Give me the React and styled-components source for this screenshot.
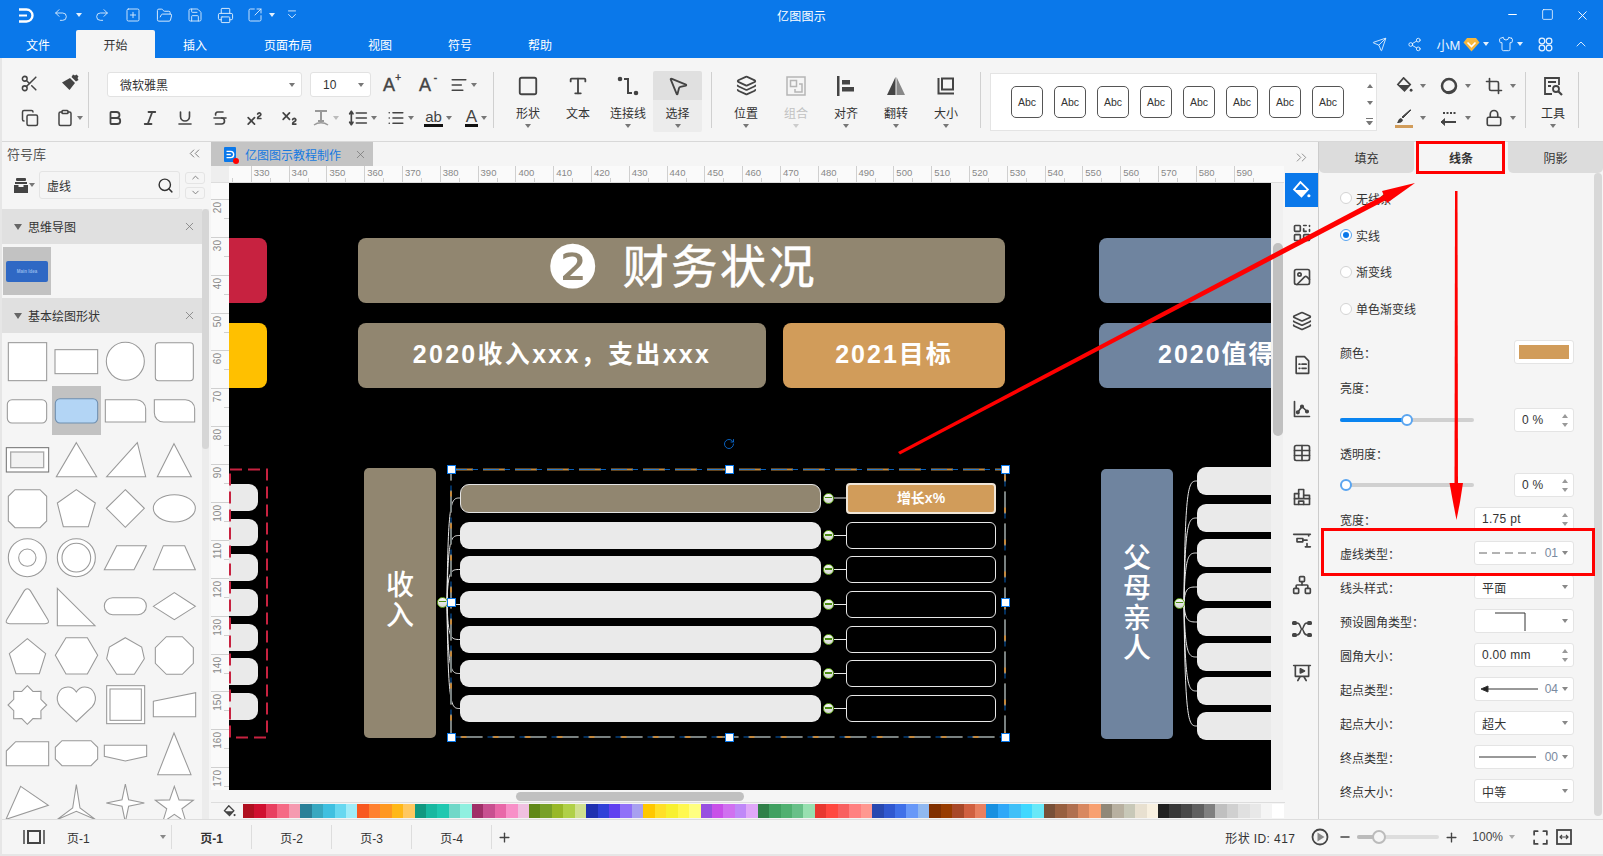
import React from "react";
import styled, { createGlobalStyle } from "styled-components";
import {
  Undo2, Redo2, SquarePlus, FolderOpen, Save, Printer, SquareArrowOutUpRight, Minus, Square, X,
  Send, Share2, Shirt, ChevronUp, ChevronDown, ChevronsLeft, ChevronsRight, Scissors, Copy, Clipboard,
  Bold, Italic, Underline, Strikethrough, Superscript, Subscript, AlignLeft, List, MousePointer2,
  Layers, Crop, Lock, Search, Image, Table, Network, Plus, RotateCw, Type,
} from "lucide-react";

const GlobalStyle = createGlobalStyle`
  html, body { margin: 0; padding: 0; width: 1603px; height: 856px; overflow: hidden; }
  body { font-family: "Liberation Sans", "Noto Sans CJK SC", sans-serif; font-size: 12px; color: #333; }
`;

const Ico = ({ size = 20, w = 1.8, vb = 24, children }) => (
  <svg width={size} height={size} viewBox={`0 0 ${vb} ${vb}`} fill="none" stroke="currentColor" strokeWidth={w} strokeLinecap="round" strokeLinejoin="round">
    {children}
  </svg>
);

const Window = styled.div`
  position: relative;
  width: 1603px;
  height: 856px;
  display: flex;
  flex-direction: column;
  background: #e6e6e6;
  overflow: hidden;
`;

const TitleBar = styled.div`
  height: 30px;
  display: grid;
  grid-template-columns: 1fr auto 1fr;
  align-items: center;
  background: #0a78ea;
  color: #fff;
`;
const Qat = styled.div`
  display: flex;
  align-items: center;
  padding-left: 10px;
  color: #d6e9fc;
`;
const QatBtn = styled.div`
  width: ${(p) => p.$w}px;
  padding-left: ${(p) => p.$pl || 0}px;
  box-sizing: border-box;
  display: flex;
  align-items: center;
  justify-content: ${(p) => (p.$pl ? "flex-start" : "center")};
  gap: ${(p) => p.$gap || 5}px;
`;
const AppTitle = styled.div`
  font-size: 12px;
  letter-spacing: 0.2px;
`;
const WinControls = styled.div`
  display: flex;
  justify-content: flex-end;
  padding-right: 3px;
`;
const WinBtn = styled.div`
  width: 35px;
  display: flex;
  justify-content: center;
`;

const MenuBar = styled.div`
  height: 28px;
  display: flex;
  align-items: stretch;
  background: #0a78ea;
`;
const MenuTab = styled.div`
  width: ${(p) => p.$w}px;
  display: flex;
  align-items: center;
  justify-content: center;
  font-size: 12px;
  color: ${(p) => (p.$active ? "#333" : "#fff")};
  background: ${(p) => (p.$active ? "#f5f5f5" : "transparent")};
  border-radius: 2px 2px 0 0;
`;
const MenuRight = styled.div`
  margin-left: auto;
  display: flex;
  align-items: center;
  padding-right: 4px;
  color: #d6e9fc;
`;
const MenuIcon = styled.div`
  width: ${(p) => p.$w}px;
  display: flex;
  align-items: center;
  justify-content: center;
  gap: 3px;
  font-size: 13px;
  color: #e8f3fe;
`;

const Caret = styled.span`
  display: inline-block;
  flex: none;
  width: 0;
  height: 0;
  border-left: 3.5px solid transparent;
  border-right: 3.5px solid transparent;
  border-top: 4px solid ${(p) => p.$c || "#777"};
`;

const Body = styled.div`
  flex: 1;
  min-height: 0;
  display: flex;
  flex-direction: column;
  margin-left: 2px;
  margin-bottom: 2px;
  background: #f5f5f5;
`;

const Ribbon = styled.div`
  height: 84px;
  box-sizing: border-box;
  flex: none;
  display: flex;
  border-bottom: 1px solid #d8d8d8;
  color: #444;
`;
const RibbonSep = styled.div`
  width: 1px;
  height: 56px;
  margin-top: 14px;
  background: #d0d0d0;
  flex: none;
`;
const ClipGroup = styled.div`
  width: 86px;
  flex: none;
  padding: 10px 0 0 7px;
  box-sizing: border-box;
  display: grid;
  grid-template-columns: 41px 39px;
  grid-template-rows: 30px 40px;
  align-items: center;
  justify-items: center;
`;
const IconCell = styled.div`
  display: flex;
  align-items: center;
  justify-content: center;
  gap: ${(p) => p.$gap || 3}px;
  width: ${(p) => (p.$w ? `${p.$w}px` : "auto")};
  flex: none;
`;
const FontGroup = styled.div`
  width: 404px;
  flex: none;
  padding: 14px 0 0 18px;
  box-sizing: border-box;
  display: flex;
  flex-direction: column;
`;
const FontRow = styled.div`
  display: flex;
  align-items: center;
  height: ${(p) => p.$h}px;
  margin-top: ${(p) => p.$mt || 0}px;
  margin-left: ${(p) => p.$ml || 0}px;
`;
const ComboBox = styled.div`
  width: ${(p) => p.$w}px;
  margin-right: ${(p) => p.$mr || 0}px;
  height: 25px;
  flex: none;
  box-sizing: border-box;
  background: #fff;
  border: 1px solid #e2e2e2;
  border-radius: 3px;
  display: flex;
  align-items: center;
  justify-content: space-between;
  padding: 0 6px 0 12px;
  color: #333;
`;
const SizedGlyph = styled.span`
  position: relative;
  font-size: 18px;
  color: #444;
  -webkit-text-stroke: 0.4px #444;
  line-height: 1;
  sup {
    position: absolute;
    right: -6px;
    top: -3px;
    font-size: 10px;
    line-height: 1;
  }
`;
const UnderGlyph = styled.span`
  display: inline-block;
  font-size: ${(p) => p.$fs || 15}px;
  line-height: 15px;
  color: #444;
  border-bottom: 3px solid ${(p) => p.$bar || "#111"};
  padding: 0 1px;
`;
const ToolGroup = styled.div`
  flex: none;
  display: flex;
  padding: 13px ${(p) => p.$pr ?? 9}px 0 ${(p) => p.$pl ?? 9}px;
`;
const ToolBtn = styled.div`
  width: ${(p) => p.$w || 50}px;
  height: 61px;
  display: flex;
  flex-direction: column;
  align-items: center;
  background: ${(p) => (p.$active ? "linear-gradient(#e0e0e0 0 29px, #ececec 29px)" : "transparent")};
  border-radius: 2px;
  color: ${(p) => (p.$off ? "#c2c2c2" : "#444")};
`;
const ToolIcon = styled.div`
  height: 29px;
  display: flex;
  align-items: center;
  justify-content: center;
`;
const ToolLabel = styled.div`
  margin-top: 6px;
  line-height: 17px;
  font-size: 12px;
  color: ${(p) => (p.$off ? "#c2c2c2" : "#333")};
`;
const ToolCaret = styled(Caret)`
  margin-top: 1px;
`;
const Gallery = styled.div`
  width: 387px;
  height: 58px;
  margin: 15px 0 0 9px;
  flex: none;
  background: #fff;
  border: 1px solid #e4e4e4;
  box-sizing: border-box;
  display: flex;
  align-items: center;
  padding-left: 20px;
  gap: 11px;
  position: relative;
`;
const AbcBox = styled.div`
  width: 32px;
  height: 32px;
  box-sizing: border-box;
  border: 1px solid #555;
  border-radius: 5px;
  display: flex;
  align-items: center;
  justify-content: center;
  font-size: 10.5px;
  color: #333;
  background: #fff;
`;
const GalleryScroll = styled.div`
  margin-left: auto;
  margin-right: 3px;
  height: 50px;
  display: flex;
  flex-direction: column;
  align-items: center;
  justify-content: space-between;
  padding: 7px 0 2px;
  box-sizing: border-box;
`;
const UpTri = styled.span`
  display: block;
  border-left: 3px solid transparent;
  border-right: 3px solid transparent;
  border-bottom: 4px solid #777;
`;
const MoreTri = styled.span`
  display: block;
  width: 7px;
  border-top: 1px solid #777;
  &::after {
    content: "";
    display: block;
    margin-top: 2px;
    border-left: 3.5px solid transparent;
    border-right: 3.5px solid transparent;
    border-top: 4px solid #777;
  }
`;
const FormatGrid = styled.div`
  width: 148px;
  flex: none;
  padding: 13px 0 0 11px;
  box-sizing: border-box;
  display: grid;
  grid-template-columns: repeat(3, 45px);
  grid-template-rows: 29px 36px;
  align-items: center;
`;
const BrushStack = styled.div`
  display: flex;
  flex-direction: column;
  align-items: center;
`;
const ColorBar = styled.div`
  width: 18px;
  height: 3px;
  background: #d19c5a;
  margin-top: 1px;
`;

const Main = styled.div`
  flex: 1;
  min-height: 0;
  display: flex;
`;

const LeftPanel = styled.div`
  width: 207px;
  flex: none;
  display: flex;
  flex-direction: column;
  overflow: hidden;
`;
const PanelHead = styled.div`
  height: 23px;
  flex: none;
  box-sizing: border-box;
  display: flex;
  align-items: center;
  justify-content: space-between;
  padding: 0 6px 0 5px;
  font-size: 13px;
  color: #555;
`;
const SearchRow = styled.div`
  height: 34px;
  margin: 3px 0 7px;
  flex: none;
  display: flex;
  align-items: center;
  padding-left: 12px;
  color: #444;
`;
const DrawerBtn = styled.div`
  width: 25px;
  flex: none;
  display: flex;
  align-items: center;
  gap: 1px;
`;
const SearchBox = styled.div`
  width: 141px;
  height: 28px;
  flex: none;
  box-sizing: border-box;
  border: 1px solid #e4e4e4;
  border-radius: 3px;
  display: flex;
  align-items: center;
  justify-content: space-between;
  padding: 0 5px 0 7px;
  font-size: 12px;
  color: #333;
`;
const SpinCol = styled.div`
  display: flex;
  flex-direction: column;
  gap: 3px;
  margin-left: 5px;
`;
const SpinBtn = styled.div`
  width: 20px;
  height: 12px;
  box-sizing: border-box;
  border: 1px solid #e4e4e4;
  border-radius: 3px;
  display: flex;
  align-items: center;
  justify-content: center;
  color: #777;
`;
const LibraryBody = styled.div`
  flex: 1;
  min-height: 0;
  display: flex;
`;
const LibraryList = styled.div`
  width: 200px;
  flex: none;
  overflow: hidden;
`;
const LibScroll = styled.div`
  width: 7px;
  flex: none;
  background: #ececec;
  &::before {
    content: "";
    display: block;
    height: 240px;
    background: #d6d6d6;
    border-radius: 4px;
  }
`;
const SectionHead = styled.div`
  height: 35px;
  display: flex;
  align-items: center;
  background: #e0e0e0;
  padding: 0 6px 0 12px;
  color: #333;
`;
const SectionTri = styled.span`
  width: 0;
  height: 0;
  border-left: 4px solid transparent;
  border-right: 4px solid transparent;
  border-top: 6px solid #666;
  margin-right: 6px;
`;
const SectionClose = styled.span`
  margin-left: auto;
  display: flex;
  color: #777;
`;
const ThumbArea = styled.div`
  height: 54px;
  box-sizing: border-box;
  padding: 3px 0 0 1px;
`;
const ThumbCell = styled.div`
  width: 48px;
  height: 48px;
  background: #c2c2c2;
  display: flex;
  align-items: center;
  justify-content: center;
`;
const ThumbShape = styled.div`
  width: 42px;
  height: 21px;
  background: #2f68c4;
  border-radius: 2px;
  color: #8fb6ea;
  font-size: 4.5px;
  font-weight: 700;
  display: flex;
  align-items: center;
  justify-content: center;
`;
const ShapeGrid = styled.div`
  display: grid;
  grid-template-columns: repeat(4, 49px);
  grid-auto-rows: 49px;
  padding: 4px 0 0 1px;
`;
const ShapeCell = styled.div`
  width: 49px;
  height: 49px;
  background: ${(p) => (p.$on ? "#c2c2c2" : "transparent")};
`;

const Center = styled.div`
  width: 1076px;
  flex: none;
  padding-left: 2px;
  box-sizing: border-box;
  display: flex;
  flex-direction: column;
`;
const DocTabs = styled.div`
  height: 24px;
  flex: none;
  display: flex;
`;
const DocTab = styled.div`
  width: 162px;
  background: #c4c4c4;
  display: flex;
  align-items: center;
  padding-left: 13px;
  box-sizing: border-box;
  color: #1679e0;
`;
const DocTabIcon = styled.span`
  position: relative;
  display: flex;
  width: 12px;
  height: 15px;
  background: #0a78ea;
  border-radius: 1px;
  color: #fff;
  align-items: center;
  justify-content: center;
  margin-right: 9px;
  &::after {
    content: "";
    position: absolute;
    right: -3px;
    bottom: -2px;
    width: 6px;
    height: 6px;
    border-radius: 50%;
    background: #f00;
  }
`;
const DocTabClose = styled.span`
  margin-left: 13px;
  display: flex;
  color: #777;
`;
const RulerTop = styled.div`
  height: 17px;
  box-sizing: border-box;
  flex: none;
  display: flex;
  background: #fafafa;
  border-bottom: 1px solid #ddd;
  margin-right: 1px;
`;
const RulerCorner = styled.div`
  width: 18px;
  flex: none;
  background: #eee;
`;
const RulerTrack = styled.div`
  flex: 1;
  min-width: 0;
  display: flex;
  overflow: hidden;
`;
const HCell = styled.div`
  position: relative;
  width: 37.8px;
  flex: none;
  box-sizing: border-box;
  border-left: 1px solid #d0d0d0;
  margin-left: ${(p) => p.$ml || 0}px;
  padding-left: 2px;
  font-size: 9.5px;
  line-height: 13px;
  color: #888;
  &::after {
    content: "";
    position: absolute;
    left: 18px;
    bottom: 0;
    height: 4px;
    border-left: 1px solid #d0d0d0;
  }
`;
const CanvasRow = styled.div`
  flex: 1;
  min-height: 0;
  display: flex;
`;
const RulerLeft = styled.div`
  width: 18px;
  flex: none;
  background: #fafafa;
  overflow: hidden;
`;
const VCell = styled.div`
  position: relative;
  height: 37.9px;
  box-sizing: border-box;
  border-top: 1px solid #d0d0d0;
  margin-top: ${(p) => p.$mt || 0}px;
  font-size: 10px;
  color: #888;
  padding: 2px 0 0 2px;
  span {
    display: block;
    writing-mode: vertical-rl;
    transform: rotate(180deg);
    line-height: 10px;
  }
  &::after {
    content: "";
    position: absolute;
    top: 18px;
    right: 0;
    width: 5px;
    border-top: 1px solid #d0d0d0;
  }
`;
const Canvas = styled.div`
  position: relative;
  width: 1042px;
  flex: none;
  background: #000;
  overflow: hidden;
`;
const DiagramSheet = styled.div`
  position: absolute;
  left: 0;
  top: 1px;
  width: 1042px;
  height: 606px;
  overflow: hidden;
`;
const VScroll = styled.div`
  width: 12px;
  flex: none;
  background: #f0f0f0;
  padding: 60px 0 0 2px;
  box-sizing: border-box;
  &::before {
    content: "";
    display: block;
    width: 10px;
    height: 193px;
    background: #c0c0c0;
    border-radius: 5px;
  }
`;
const HScroll = styled.div`
  height: 13px;
  flex: none;
  padding: 2px 0 0 305px;
  box-sizing: border-box;
  border-bottom: 1px solid #ddd;
  &::before {
    content: "";
    display: block;
    width: 228px;
    height: 9px;
    background: #c0c0c0;
    border-radius: 5px;
  }
`;
const PaletteRow = styled.div`
  height: 16px;
  flex: none;
  display: flex;
  align-items: center;
  color: #444;
`;
const BucketCell = styled.div`
  width: 32px;
  flex: none;
  display: flex;
  justify-content: center;
  padding-left: 4px;
  box-sizing: border-box;
`;
const Swatch = styled.div`
  width: 11.44px;
  height: 14px;
  flex: none;
  background: ${(p) => p.$c};
`;

const Block = styled.div`
  position: absolute;
  left: ${(p) => p.$x}px;
  top: ${(p) => p.$y}px;
  width: ${(p) => p.$w}px;
  height: ${(p) => p.$h}px;
  box-sizing: border-box;
  padding-bottom: ${(p) => p.$pb || 0}px;
  background: ${(p) => p.$c};
  border-radius: ${(p) => p.$r || 8}px;
  color: #fff;
  display: flex;
  align-items: center;
  justify-content: ${(p) => p.$j || "center"};
  white-space: nowrap;
`;
const HeadText = styled.span`
  font-size: 46px;
  letter-spacing: 2.6px;
  line-height: 1;
  margin-left: 23px;
  -webkit-text-stroke: 0.6px #fff;
`;
const NumGlyph = styled.span`
  font-family: "DejaVu Sans", sans-serif;
  font-size: 60px;
  line-height: 1;
`;
const SubHead = styled.span`
  font-size: 25px;
  font-weight: 700;
  letter-spacing: ${(p) => p.$ls || 2}px;
  padding-left: ${(p) => p.$pl || 0}px;
`;
const VertLabel = styled.span`
  font-size: 28px;
  font-weight: 500;
  line-height: ${(p) => p.$lh}px;
  width: 30px;
  text-align: center;
  white-space: normal;
`;
const LeafRow = styled.div`
  position: absolute;
  left: ${(p) => p.$x}px;
  top: ${(p) => p.$y}px;
  width: ${(p) => p.$w}px;
  height: ${(p) => p.$h || 27}px;
  box-sizing: border-box;
  background: ${(p) => p.$c || "#eaeaea"};
  border-radius: ${(p) => p.$r || "9px"};
  border: ${(p) => p.$b || "none"};
`;
const LeafBox = styled(LeafRow)`
  display: flex;
  align-items: center;
  justify-content: center;
  padding-bottom: 4px;
  color: #fff;
  font-size: 14px;
  font-weight: 700;
`;
const Knob = styled.div`
  position: absolute;
  left: ${(p) => p.$x - 5.5}px;
  top: ${(p) => p.$y - 5.5}px;
  width: 11px;
  height: 11px;
  box-sizing: border-box;
  border-radius: 50%;
  border: 1.5px solid #65a81f;
  background: linear-gradient(#f8f8f8, #d4d4d4);
  &::after {
    content: "";
    position: absolute;
    left: 1px;
    right: 1px;
    top: 3px;
    height: 1.5px;
    background: #4d8f12;
  }
`;
const DiagramLines = styled.svg`
  position: absolute;
  left: 0;
  top: 0;
  pointer-events: none;
`;
const Handle = styled.div`
  position: absolute;
  left: ${(p) => p.$x - 4.5}px;
  top: ${(p) => p.$y - 4.5}px;
  width: 9px;
  height: 9px;
  box-sizing: border-box;
  background: #fff;
  border: 1.5px solid #0a78ea;
`;
const RotateMark = styled.div`
  position: absolute;
  left: 494px;
  top: 254px;
  display: flex;
  color: #0a6ad0;
`;

const SideRail = styled.div`
  width: 34px;
  flex: none;
  box-sizing: border-box;
  border-right: 1px solid #ccc;
  display: flex;
  flex-direction: column;
  align-items: stretch;
  color: #444;
`;
const RailTop = styled.div`
  height: 31px;
  display: flex;
  align-items: center;
  justify-content: center;
  color: #888;
`;
const RailItem = styled.div`
  height: ${(p) => (p.$on ? 34 : 44)}px;
  margin-bottom: ${(p) => (p.$on ? 4 : 0)}px;
  display: flex;
  align-items: center;
  justify-content: center;
  color: ${(p) => (p.$on ? "#fff" : "#444")};
  background: ${(p) => (p.$on ? "#0a78ea" : "transparent")};
`;
const PropPanel = styled.div`
  flex: 1;
  min-width: 0;
  display: flex;
  flex-direction: column;
`;
const PropTabs = styled.div`
  height: 31px;
  flex: none;
  display: grid;
  grid-template-columns: 95px 86px 1fr;
  column-gap: 4px;
`;
const PropTab = styled.div`
  display: flex;
  align-items: center;
  justify-content: center;
  color: #333;
  font-weight: ${(p) => (p.$on ? 700 : 400)};
  background: ${(p) => (p.$on ? "#f5f5f5" : "#dcdcdc")};
  border-radius: 0 0 5px 5px;
`;
const PropContent = styled.div`
  flex: 1;
  min-height: 0;
  display: flex;
`;
const PropForm = styled.div`
  width: 275px;
  flex: none;
  box-sizing: border-box;
  padding: 7px 0 0 21px;
  display: flex;
  flex-direction: column;
`;
const PropScroll = styled.div`
  width: 8px;
  flex: none;
  margin-bottom: 3px;
  background: #d8d8d8;
  border-radius: 4px;
`;
const RadioRow = styled.div`
  height: 36.75px;
  flex: none;
  display: flex;
  align-items: center;
  gap: 4px;
`;
const Radio = styled.span`
  width: 12px;
  height: 12px;
  flex: none;
  box-sizing: border-box;
  border-radius: 50%;
  background: #fff;
  border: 1px solid ${(p) => (p.$on ? "#5aa5f0" : "#d4d4d4")};
  display: flex;
  align-items: center;
  justify-content: center;
  &::after {
    content: "";
    width: 6px;
    height: 6px;
    border-radius: 50%;
    background: ${(p) => (p.$on ? "#0a78ea" : "transparent")};
  }
`;
const PropRow = styled.div`
  height: ${(p) => p.$h || 24}px;
  flex: none;
  margin-top: ${(p) => p.$mt ?? 10}px;
  display: flex;
  align-items: center;
  justify-content: space-between;
  padding-right: 20px;
`;
const Field = styled.div`
  width: ${(p) => p.$w || 100}px;
  height: 24px;
  flex: none;
  box-sizing: border-box;
  background: #fff;
  border: 1px solid #e4e4e4;
  border-radius: 3px;
  display: flex;
  align-items: center;
  padding: 0 5px 0 7px;
  color: #333;
  position: relative;
`;
const FieldText = styled.span`
  flex: 1;
  letter-spacing: 0.3px;
`;
const FieldCode = styled.span`
  margin: 0 4px 0 auto;
  color: #7a8aa0;
`;
const FieldDraw = styled.svg`
  margin: 0 auto 0 -3px;
  flex: none;
`;
const Spin = styled.span`
  display: flex;
  flex-direction: column;
  gap: 5px;
  &::before, &::after {
    content: "";
    display: block;
    border-left: 3px solid transparent;
    border-right: 3px solid transparent;
  }
  &::before { border-bottom: 4px solid #999; }
  &::after { border-top: 4px solid #999; }
`;
const ColorField = styled(Field)`
  width: 60px;
  height: 24px;
  padding: 4px;
  &::after {
    content: "";
    flex: 1;
    align-self: stretch;
    background: #d19c5a;
  }
`;
const SliderTrack = styled.div`
  position: relative;
  width: 134px;
  height: 4px;
  border-radius: 2px;
  background: #d0d0d0;
`;
const SliderFill = styled.div`
  position: absolute;
  left: 0;
  top: 0;
  height: 4px;
  border-radius: 2px;
  width: ${(p) => p.$v}px;
  background: #0a84f0;
`;
const SliderThumb = styled.div`
  position: absolute;
  left: ${(p) => p.$v - 6}px;
  top: -4px;
  width: 12px;
  height: 12px;
  box-sizing: border-box;
  border-radius: 50%;
  background: #fff;
  border: 2px solid #5aa5f0;
`;

const StatusBar = styled.div`
  height: 35px;
  box-sizing: border-box;
  flex: none;
  display: flex;
  align-items: center;
  border-top: 1px solid #ddd;
  color: #333;
`;
const PageSelect = styled.div`
  width: 170px;
  height: 24px;
  flex: none;
  box-sizing: border-box;
  border-right: 1px solid #ddd;
  display: flex;
  align-items: center;
  padding: 0 5px 0 21px;
`;
const PageName = styled.span`
  margin-left: 22px;
  flex: 1;
`;
const PageTab = styled.div`
  width: 80px;
  height: 24px;
  flex: none;
  box-sizing: border-box;
  border-right: 1px solid #ddd;
  display: flex;
  align-items: center;
  justify-content: center;
  font-weight: ${(p) => (p.$on ? 700 : 400)};
`;
const AddPage = styled.div`
  margin-left: 5px;
  display: flex;
  color: #444;
`;
const StatusRight = styled.div`
  margin-left: auto;
  display: flex;
  align-items: center;
  color: #444;
  padding-right: 31px;
`;
const ShapeId = styled.span`
  letter-spacing: 0.4px;
  margin-right: 16px;
  color: #333;
`;
const ZoomTrack = styled.div`
  position: relative;
  width: 82px;
  height: 4px;
  margin: 0 5px;
  border-radius: 2px;
  background: #ddd;
  &::before {
    content: "";
    position: absolute;
    left: 0;
    top: 0;
    width: 21px;
    height: 4px;
    background: #bbb;
    border-radius: 2px;
  }
  &::after {
    content: "";
    position: absolute;
    left: 15px;
    top: -5px;
    width: 14px;
    height: 14px;
    box-sizing: border-box;
    border-radius: 50%;
    background: #f5f5f5;
    border: 2px solid #bbb;
  }
`;
const ZoomValue = styled.span`
  margin: 0 6px 0 13px;
`;
const StatusIcon = styled.span`
  display: flex;
  margin-left: ${(p) => p.$ml || 0}px;
  margin-right: ${(p) => p.$mr || 0}px;
`;

const Annotations = styled.svg`
  position: absolute;
  left: 0;
  top: 0;
  pointer-events: none;
`;

/* --- icons that no package has in this shape --- */
const AppLogo = () => (
  <svg width="17" height="17" viewBox="0 0 17 17" fill="none" stroke="#fff" strokeWidth="2.4">
    <path d="M1 2.5h7.5a6 6 0 0 1 0 12H1" />
    <path d="M1 8.5h8" strokeWidth="2" />
  </svg>
);
const FileLogo = () => (
  <svg width="9" height="9" viewBox="0 0 17 17" fill="none" stroke="#fff" strokeWidth="2.6">
    <path d="M1 2.5h7.5a6 6 0 0 1 0 12H1" />
    <path d="M1 8.5h8" />
  </svg>
);
const QatMore = () => (
  <Ico size={14} w={1.6}>
    <path d="M6 5h12M6 11l6 6 6-6" />
  </Ico>
);
const Diamond = () => (
  <svg width="17" height="15" viewBox="0 0 17 15">
    <path d="M4 1h9l3.5 4.5L8.5 14.5.5 5.500z" fill="#f6b73c" />
    <path d="M4.500 5.500l4 4 4-4" fill="none" stroke="#fff" strokeWidth="1.6" />
  </svg>
);
const AppsIcon = () => (
  <Ico size={17} w={1.7}>
    <circle cx="7" cy="7" r="4" />
    <circle cx="17" cy="7" r="4" />
    <circle cx="7" cy="17" r="4" />
    <circle cx="17" cy="17" r="4" />
  </Ico>
);
const PainterIcon = () => (
  <svg width="20" height="20" viewBox="0 0 20 20" fill="#444">
    <path d="M13 1.500l2 1 1.500-1 2 2-1 1.500 1 2-2.500 1.500-4.500-4.500z" />
    <path d="M10 5l5 5-5.500 7L2 9.500z" />
  </svg>
);
const LineSpace = () => (
  <Ico size={20} w={2}>
    <path d="M10 6h12M10 12h12M10 18h12M4 4v16M2 7l2-3 2 3M2 17l2 3 2-3" />
  </Ico>
);
const TextShadow = () => (
  <svg width="18" height="18" viewBox="0 0 18 18" fill="none" stroke="#999" strokeWidth="2">
    <path d="M3 2h12M9 2v10M6 12h6" />
    <path d="M2 16c4-3 10-3 14 0" strokeWidth="1.500" />
  </svg>
);
const ConnectorIcon = () => (
  <svg width="22" height="22" viewBox="0 0 22 22" fill="none" stroke="#444" strokeWidth="2">
    <circle cx="3" cy="4" r="1.300" fill="#444" />
    <circle cx="19" cy="18" r="1.300" fill="#444" />
    <path d="M7 4h4v14h4" />
  </svg>
);
const GroupIcon = () => (
  <svg width="20" height="20" viewBox="0 0 20 20" fill="none" stroke="#b5b5b5" strokeWidth="1.500">
    <rect x="1" y="1" width="18" height="18" />
    <rect x="4.500" y="4.500" width="6" height="6" />
    <path d="M13 8h3v8H9v-3" />
  </svg>
);
const AlignIcon = () => (
  <svg width="20" height="20" viewBox="0 0 20 20" fill="#444">
    <rect x="1" y="0" width="2.500" height="20" />
    <rect x="6" y="4" width="8" height="4.500" />
    <rect x="6" y="11" width="12" height="4.500" />
  </svg>
);
const FlipIcon = () => (
  <svg width="20" height="20" viewBox="0 0 20 20">
    <path d="M9.500 1v18H1z" fill="#444" />
    <path d="M10.500 1v18H19z" fill="#888" />
  </svg>
);
const SizeIcon = () => (
  <svg width="18" height="18" viewBox="0 0 18 18" fill="none" stroke="#444" strokeWidth="2">
    <path d="M1.500 1v15.500H17" />
    <rect x="5" y="1.500" width="11" height="11" />
  </svg>
);
const BucketIcon = ({ size = 17, fill = "#444", drop = "#444" }) => (
  <svg width={size} height={size} viewBox="0 0 18 18">
    <path d="M8 1l7 7-6 6.500L2 8z" fill="none" stroke={fill} strokeWidth="1.800" />
    <path d="M2.500 8.500h12L9 14z" fill={fill} />
    <circle cx="16" cy="14" r="1.500" fill={drop} />
  </svg>
);
const BlobIcon = () => (
  <svg width="18" height="18" viewBox="0 0 18 18">
    <circle cx="9" cy="9" r="7" fill="none" stroke="#444" strokeWidth="2.500" />
    <path d="M3 12c3 3 9 3 12-2l1 2-4 4-5 1z" fill="#444" />
  </svg>
);
const BrushIcon = () => (
  <svg width="18" height="15" viewBox="0 0 18 15">
    <path d="M16 1L8 9l-1-1 8-7z" fill="#444" stroke="#444" />
    <path d="M6 9l2 2c-1 3-4 3-6 3 1-1 1-4 4-5z" fill="#444" />
  </svg>
);
const LineStyleIcon = () => (
  <svg width="18" height="18" viewBox="0 0 18 18" fill="none" stroke="#444" strokeWidth="2">
    <path d="M3 4h13" strokeDasharray="2 1.500" />
    <path d="M1 13h15" />
    <path d="M5 9.500L1 13l4 3.500" fill="#444" strokeWidth="1" />
  </svg>
);
const ToolsIcon = () => (
  <svg width="20" height="20" viewBox="0 0 20 20" fill="none" stroke="#444" strokeWidth="1.800">
    <path d="M9 18H2V2h14v7" />
    <path d="M5 6h8M5 10h3" />
    <circle cx="13" cy="13" r="3" />
    <path d="M15.500 15.500L19 19" strokeWidth="2.200" />
  </svg>
);
const DrawerIcon = () => (
  <svg width="14" height="15" viewBox="0 0 14 15" fill="#444">
    <rect x="2" y="0" width="10" height="3" rx="1" />
    <rect x="1" y="4" width="12" height="2" />
    <path d="M0 7h4.500v2h5V7H14v8H0z" />
  </svg>
);
const GridAppIcon = () => (
  <Ico size={20} w={2}>
    <rect x="3" y="3" width="7" height="7" rx="1" />
    <rect x="3" y="14" width="7" height="7" rx="1" />
    <rect x="14" y="14" width="7" height="7" rx="1" />
    <path d="M14 3h3M21 3v1M14 7v3h3M21 8v2" />
  </Ico>
);
const DocListIcon = () => (
  <Ico size={20} w={2}>
    <path d="M5 2h10l5 5v15H5z" />
    <path d="M8.500 11h1M12 11h5M8.500 16h1M12 16h5" />
  </Ico>
);
const ChartIcon = () => (
  <Ico size={20} w={2}>
    <path d="M3 3v18h18" />
    <path d="M7 16l5-7 6 6" />
    <circle cx="7" cy="16" r="1.500" fill="#444" />
    <circle cx="12" cy="9" r="1.500" fill="#444" />
    <circle cx="18" cy="15" r="1.500" fill="#444" />
  </Ico>
);
const FloorIcon = () => (
  <Ico size={20} w={2}>
    <path d="M3 21V8h5V3h6v7h7v11z" />
    <path d="M8 8v6M14 10v4M8 21v-4h6v4M3 14h18" />
  </Ico>
);
const GanttIcon = () => (
  <Ico size={20} w={2}>
    <path d="M2 4h20M20 4v2M6 9h7v4H6zM13 11h5M16 19h6M18 15v4" />
  </Ico>
);
const ShrinkIcon = () => (
  <svg width="20" height="18" viewBox="0 0 20 18" fill="#444">
    <rect x="0" y="1" width="5" height="4" rx="1.500" />
    <rect x="15" y="1" width="5" height="4" rx="1.500" />
    <rect x="0" y="13" width="5" height="4" rx="1.500" />
    <rect x="15" y="13" width="5" height="4" rx="1.500" />
    <path d="M5 3c4 0 3 6 5 6s1-6 5-6M5 15c4 0 3-6 5-6s1 6 5 6" fill="none" stroke="#444" strokeWidth="1.500" />
  </svg>
);
const SlideIcon = () => (
  <Ico size={20} w={2}>
    <path d="M2 3h20M4 3v13h16V3M7 21l3-5M17 21l-3-5" />
    <path d="M10 7l5 2.500-5 2.500z" fill="#444" />
  </Ico>
);
const PageViewIcon = () => (
  <svg width="22" height="14" viewBox="0 0 22 14" fill="none" stroke="#444" strokeWidth="2">
    <rect x="5" y="1" width="12" height="12" />
    <path d="M1 0v14M21 0v14" strokeWidth="1.500" />
  </svg>
);
const PlayRing = () => (
  <svg width="18" height="18" viewBox="0 0 18 18">
    <circle cx="9" cy="9" r="7.500" fill="none" stroke="#444" strokeWidth="1.800" />
    <path d="M6.500 4.500L13.500 9l-7 4.500z" fill="#888" />
  </svg>
);
const FullIcon = () => (
  <Ico size={17} w={2.4}>
    <path d="M3 8V3h5M16 3h5v5M21 16v5h-5M8 21H3v-5" />
  </Ico>
);
const FitIcon = () => (
  <svg width="16" height="16" viewBox="0 0 16 16" fill="none" stroke="#444" strokeWidth="1.800">
    <rect x="1" y="1" width="14" height="14" />
    <path d="M4 8h8M6 6l-2 2 2 2M10 6l2 2-2 2" strokeWidth="1.200" />
  </svg>
);

/* --- palette strip --- */
const palette = [
  "#b01020","#d01030","#e84060","#f56a85","#f59ab0","#2a8098","#38a8c0","#40c0e0","#68d8f0","#a0ecf8",
  "#f85820","#ff8030","#ff9820","#ffb818","#ffc860","#109880","#18b8a0","#20c8b0","#70d8c8","#90f0e0",
  "#a03068","#c85090","#e868a8","#f890c8","#f0c0e0","#608818","#78a028","#98b828","#b0d048","#d0e090",
  "#2030b0","#3040d8","#6040f0","#9070f8","#a8a0f0","#ffc800","#ffe028","#f8f030","#fff850","#ffff80",
  "#9850e0","#c850e8","#d070f0","#c088f8","#e0a8f8","#308048","#40a060","#50b070","#68c088","#98e0b0",
  "#e83830","#ff4840","#f86060","#ff8080","#ff9890","#2848b0","#3058d0","#4070e8","#6898f8","#90b8f0",
  "#803000","#983c00","#a84828","#d06040","#e88060","#1890e0","#30a8f8","#40c0f8","#40d8ff","#68e8f8",
  "#785038","#986040","#b07050","#d88860","#f8a070","#908878","#b8b0a0","#c8c8b8","#e8e0d0","#f8f0e0",
  "#202020","#383838","#484848","#606060","#808080","#c0c0c0","#d0d0d0","#e0e0e0","#e8e8e8","#f5f5f5","#ffffff",
];

/* --- symbol library, drawn on a 147 unit cell --- */
const star = (cx, cy, outer, inner, n) =>
  Array.from({ length: n * 2 }, (_, i) => {
    const r = i % 2 ? inner : outer;
    const a = (Math.PI * i) / n - Math.PI / 2;
    return `${(cx + r * Math.cos(a)).toFixed(1)},${(cy + r * Math.sin(a)).toFixed(1)}`;
  }).join(" ");

const shapes = [
  <rect x="16" y="17" width="115" height="114" />,
  <rect x="9" y="38" width="128" height="72" />,
  <circle cx="73" cy="73" r="57" />,
  <rect x="16" y="17" width="114" height="114" rx="10" />,
  <rect x="13" y="41" width="118" height="70" rx="14" />,
  <rect x="10" y="38" width="127" height="73" rx="14" fill="#b3d5f5" stroke="#6f8fb0" />,
  <path d="M13 41h93a28 28 0 0 1 28 28v39H13z" />,
  <path d="M13 41h93a28 28 0 0 1 28 28v39H41a28 28 0 0 1-28-28z" />,
  <g stroke="#777">
    <rect x="10" y="38" width="127" height="73" />
    <rect x="23" y="51" width="99" height="47" fill="#f2f2f2" stroke="#aaa" strokeWidth="4" />
  </g>,
  <polygon points="73,23 134,125 13,125" />,
  <polygon points="109,23 134,125 17,125" />,
  <polygon points="72,26 124,125 22,125" />,
  <polygon points="36,17 111,17 131,37 131,111 111,131 36,131 16,111 16,37" />,
  <polygon points="73,17 130,57 109,128 34,128 16,57" />,
  <polygon points="73,17 130,73 73,130 16,73" />,
  <ellipse cx="73" cy="73" rx="63" ry="41" />,
  <g>
    <circle cx="73" cy="74" r="57" />
    <circle cx="73" cy="74" r="26" />
  </g>,
  <g>
    <circle cx="73" cy="74" r="57" />
    <circle cx="73" cy="74" r="43" />
  </g>,
  <polygon points="47,38 136,38 99,110 10,110" />,
  <polygon points="40,38 104,38 136,110 10,110" />,
  <path d="M64 26q9-12 18 0l52 86q8 13-8 13H20q-16 0-8-13z" />,
  <polygon points="16,19 129,131 16,131" />,
  <rect x="10" y="47" width="126" height="51" rx="25" />,
  <polygon points="10,73 73,32 136,73 73,113" />,
  <polygon points="73,23 128,68 109,128 39,128 19,68" />,
  <polygon points="10,73 42,20 106,20 137,73 106,129 42,129" />,
  <polygon points="73,20 122,48 130,83 100,130 47,130 17,83 25,48" />,
  <polygon points="49,17 97,17 130,50 130,97 97,130 49,130 16,97 16,50" />,
  <polygon points={star(73, 75, 58, 44, 8)} />,
  <path d="M73 125L25 80C5 55 20 21 48 21c12 0 20 7 25 15 5-8 13-15 25-15 28 0 43 34 23 59z" />,
  <g>
    <rect x="17" y="17" width="114" height="114" />
    <rect x="27" y="27" width="94" height="94" />
  </g>,
  <polygon points="10,64 137,38 137,110 10,110" />,
  <polygon points="10,66 38,38 137,38 137,110 10,110" />,
  <polygon points="30,35 117,35 137,55 137,90 117,110 30,110 10,90 10,55" />,
  <polygon points="10,49 137,49 137,82 73,96 10,82" />,
  <polygon points="72,12 123,137 23,137" />,
  <polygon points="53,25 136,82 9,124" />,
  <g>
    <polygon points="73,20 84,90 131,125 73,100 15,125 62,90" />
  </g>,
  <polygon points={star(73, 75, 57, 14, 4)} />,
  <polygon points={star(73, 85, 60, 24, 5)} />,
];

const ShapeTile = ({ on, children }) => (
  <ShapeCell $on={on}>
    <svg width="49" height="49" viewBox="0 0 147 147" fill="#fff" stroke="#999" strokeWidth="3.200">
      {children}
    </svg>
  </ShapeCell>
);

/* --- free canvas content --- */
const midRows = [338, 372, 407, 442, 476, 511];
const leftStubs = [300, 335, 370, 405, 440, 474, 509];
const farRows = [283, 320, 355, 389, 424, 459, 493, 528];
const knobRows = [314, ...midRows.map((y) => y + 13.5)];
const handles = [
  [222, 285], [500, 285], [776, 285], [222, 418], [776, 418], [222, 553], [500, 553], [776, 553],
];

const Diagram = () => (
  <Canvas>
    <DiagramSheet>
      <Block $x={-20} $y={54} $w={58} $h={65} $c="#c72240" />
      <Block $x={-20} $y={139} $w={58} $h={65} $c="#ffc000" />
      <Block $x={129} $y={54} $w={647} $h={65} $c="#918670" $pb={7}>
        <NumGlyph>❷</NumGlyph>
        <HeadText>财务状况</HeadText>
      </Block>
      <Block $x={129} $y={139} $w={408} $h={65} $c="#918670" $pb={8}>
        <SubHead $ls={2.3}>2020收入xxx，支出xxx</SubHead>
      </Block>
      <Block $x={554} $y={139} $w={222} $h={65} $c="#d19c5a" $pb={8}>
        <SubHead>2021目标</SubHead>
      </Block>
      <Block $x={870} $y={54} $w={200} $h={65} $c="#6f849f" />
      <Block $x={870} $y={139} $w={200} $h={65} $c="#6f849f" $j="flex-start" $pb={8}>
        <SubHead $pl={59}>2020值得</SubHead>
      </Block>

      {leftStubs.map((y) => (
        <LeafRow key={y} $x={-20} $y={y} $w={49} />
      ))}

      <Block $x={135} $y={284} $w={72} $h={270} $c="#918670" $r={5} $pb={4}>
        <VertLabel $lh={30}>收入</VertLabel>
      </Block>
      <LeafRow $x={231} $y={300} $w={361} $h={29} $c="#918670" $b="1.5px solid #e4e4e4" />
      {midRows.map((y) => (
        <LeafRow key={y} $x={231} $y={y} $w={361} />
      ))}
      <LeafBox $x={617} $y={299} $w={150} $h={31} $c="#d19c5a" $r="4px" $b="2px solid #f0e6d8">增长x%</LeafBox>
      {midRows.map((y) => (
        <LeafBox key={y} $x={617} $y={y} $w={150} $c="#000" $r="6px" $b="1px solid #e8e8e8" />
      ))}

      <Block $x={872} $y={285} $w={72} $h={270} $c="#6f849f" $r={5}>
        <VertLabel $lh={30}>父母亲人</VertLabel>
      </Block>
      {farRows.map((y) => (
        <LeafRow key={y} $x={968} $y={y} $w={90} $h={28} />
      ))}

      <DiagramLines width="1042" height="606" fill="none" stroke="#e8e8e8" strokeWidth="1">
        {knobRows.map((y) => (
          <path key={y} d={`M218 418C219 ${y} 222 ${y} 231 ${y}`} />
        ))}
        {knobRows.map((y) => (
          <path key={y} d={`M605 ${y}H617`} />
        ))}
        {farRows.map((y) => (
          <path key={y} d={`M955 419C956 ${y + 14} 960 ${y + 14} 968 ${y + 14}`} />
        ))}
        <rect x="1" y="285.500" width="37" height="268" stroke="#c72240" strokeWidth="2" strokeDasharray="12 6" />
        <rect x="222" y="285.500" width="554" height="267.500" stroke="#c4883c" strokeWidth="2" strokeDasharray="22 10" />
        <rect x="222" y="285.500" width="554" height="267.500" stroke="#0a78ea" strokeWidth="0.800" strokeDasharray="16 5 6 5" />
      </DiagramLines>

      <Knob $x={213} $y={418} />
      {knobRows.map((y) => (
        <Knob key={y} $x={599} $y={y} />
      ))}
      <Knob $x={950} $y={419} />
      {handles.map(([x, y]) => (
        <Handle key={`${x}-${y}`} $x={x} $y={y} />
      ))}
      <RotateMark>
        <RotateCw size={12} strokeWidth={1.8} />
      </RotateMark>
    </DiagramSheet>
  </Canvas>
);

const hLabels = Array.from({ length: 28 }, (_, i) => 320 + i * 10);
const vLabels = Array.from({ length: 17 }, (_, i) => 10 + i * 10);

const propRows = [
  { label: "线头样式：", text: "平面" },
  { label: "预设圆角类型：", draw: <path d="M16 3h30v18" /> },
  { label: "圆角大小：", text: "0.00 mm", spin: true },
  { label: "起点类型：", code: "04", draw: <g><path d="M6 11h53" /><path d="M2 11l7-3v6z" fill="#222" /></g> },
  { label: "起点大小：", text: "超大" },
  { label: "终点类型：", code: "00", draw: <path d="M0 11h57" /> },
  { label: "终点大小：", text: "中等" },
];

const Field2 = ({ text, spin, code, draw }) => (
  <Field>
    {text && <FieldText>{text}</FieldText>}
    {draw && (
      <FieldDraw width="60" height="22" viewBox="0 0 60 22" fill="none" stroke="#333" strokeWidth="1">
        {draw}
      </FieldDraw>
    )}
    {code && <FieldCode>{code}</FieldCode>}
    {spin ? <Spin /> : <Caret $c="#888" />}
  </Field>
);

const App = () => (
  <Window>
    <GlobalStyle />
    <TitleBar>
      <Qat>
        <QatBtn $w={32}><AppLogo /></QatBtn>
        <QatBtn $w={44} $pl={11} $gap={7}><Undo2 size={16} strokeWidth={1.4} /><Caret $c="#e4f0fc" /></QatBtn>
        <QatBtn $w={32}><Redo2 size={16} strokeWidth={1.4} /></QatBtn>
        <QatBtn $w={30}><SquarePlus size={16} strokeWidth={1.4} /></QatBtn>
        <QatBtn $w={32}><FolderOpen size={17} strokeWidth={1.4} /></QatBtn>
        <QatBtn $w={30}><Save size={16} strokeWidth={1.4} /></QatBtn>
        <QatBtn $w={30}><Printer size={17} strokeWidth={1.4} /></QatBtn>
        <QatBtn $w={40} $pl={7} $gap={6}><SquareArrowOutUpRight size={16} strokeWidth={1.4} /><Caret $c="#e4f0fc" /></QatBtn>
        <QatBtn $w={24}><QatMore /></QatBtn>
      </Qat>
      <AppTitle>亿图图示</AppTitle>
      <WinControls>
        <WinBtn><Minus size={13} strokeWidth={2.2} /></WinBtn>
        <WinBtn><Square size={13} strokeWidth={1.4} /></WinBtn>
        <WinBtn><X size={15} strokeWidth={1.5} /></WinBtn>
      </WinControls>
    </TitleBar>

    <MenuBar>
      <MenuTab $w={76}>文件</MenuTab>
      <MenuTab $w={79} $active>开始</MenuTab>
      <MenuTab $w={80}>插入</MenuTab>
      <MenuTab $w={106}>页面布局</MenuTab>
      <MenuTab $w={78}>视图</MenuTab>
      <MenuTab $w={82}>符号</MenuTab>
      <MenuTab $w={78}>帮助</MenuTab>
      <MenuRight>
        <MenuIcon $w={36}><Send size={15} strokeWidth={1.4} /></MenuIcon>
        <MenuIcon $w={35}><Share2 size={15} strokeWidth={1.4} /></MenuIcon>
        <MenuIcon $w={62}>小M<Diamond /><Caret $c="#e4f0fc" /></MenuIcon>
        <MenuIcon $w={33}><Shirt size={16} strokeWidth={1.4} /><Caret $c="#e4f0fc" /></MenuIcon>
        <MenuIcon $w={36}><AppsIcon /></MenuIcon>
        <MenuIcon $w={36}><ChevronUp size={16} strokeWidth={1.4} /></MenuIcon>
      </MenuRight>
    </MenuBar>

    <Body>
      <Ribbon>
        <ClipGroup>
          <Scissors size={19} strokeWidth={1.9} />
          <PainterIcon />
          <Copy size={18} strokeWidth={2} />
          <IconCell><Clipboard size={18} strokeWidth={2} /><Caret /></IconCell>
        </ClipGroup>
        <RibbonSep />
        <FontGroup>
          <FontRow $h={25}>
            <ComboBox $w={195} $mr={8}>微软雅黑<Caret /></ComboBox>
            <ComboBox $w={61}>10<Caret /></ComboBox>
            <IconCell $w={36}><SizedGlyph>A<sup>+</sup></SizedGlyph></IconCell>
            <IconCell $w={36}><SizedGlyph>A<sup>-</sup></SizedGlyph></IconCell>
            <IconCell $w={40}><AlignLeft size={18} strokeWidth={2.2} /><Caret /></IconCell>
          </FontRow>
          <FontRow $h={32} $mt={5} $ml={-10}>
            <IconCell $w={35}><Bold size={18} strokeWidth={2.4} /></IconCell>
            <IconCell $w={35}><Italic size={18} strokeWidth={2.4} /></IconCell>
            <IconCell $w={35}><Underline size={18} strokeWidth={2.2} /></IconCell>
            <IconCell $w={35}><Strikethrough size={18} strokeWidth={2.2} /></IconCell>
            <IconCell $w={35}><Superscript size={19} strokeWidth={2.2} /></IconCell>
            <IconCell $w={35}><Subscript size={19} strokeWidth={2.2} /></IconCell>
            <IconCell $w={36}><TextShadow /><Caret $c="#bbb" /></IconCell>
            <IconCell $w={38}><LineSpace /><Caret /></IconCell>
            <IconCell $w={38}><List size={18} strokeWidth={2.2} /><Caret /></IconCell>
            <IconCell $w={38}><UnderGlyph>ab</UnderGlyph><Caret /></IconCell>
            <IconCell $w={38}><UnderGlyph $fs={17}>A</UnderGlyph><Caret /></IconCell>
          </FontRow>
        </FontGroup>
        <RibbonSep />
        <ToolGroup>
          <ToolBtn>
            <ToolIcon><Square size={22} strokeWidth={2} /></ToolIcon>
            <ToolLabel>形状</ToolLabel>
            <ToolCaret />
          </ToolBtn>
          <ToolBtn>
            <ToolIcon><Type size={22} strokeWidth={2} /></ToolIcon>
            <ToolLabel>文本</ToolLabel>
          </ToolBtn>
          <ToolBtn>
            <ToolIcon><ConnectorIcon /></ToolIcon>
            <ToolLabel>连接线</ToolLabel>
            <ToolCaret />
          </ToolBtn>
          <ToolBtn $active $w={49}>
            <ToolIcon><MousePointer2 size={22} strokeWidth={2} /></ToolIcon>
            <ToolLabel>选择</ToolLabel>
            <ToolCaret />
          </ToolBtn>
        </ToolGroup>
        <RibbonSep />
        <ToolGroup>
          <ToolBtn>
            <ToolIcon><Layers size={21} strokeWidth={2} /></ToolIcon>
            <ToolLabel>位置</ToolLabel>
            <ToolCaret />
          </ToolBtn>
          <ToolBtn $off>
            <ToolIcon><GroupIcon /></ToolIcon>
            <ToolLabel $off>组合</ToolLabel>
            <ToolCaret $c="#ccc" />
          </ToolBtn>
          <ToolBtn>
            <ToolIcon><AlignIcon /></ToolIcon>
            <ToolLabel>对齐</ToolLabel>
            <ToolCaret />
          </ToolBtn>
          <ToolBtn>
            <ToolIcon><FlipIcon /></ToolIcon>
            <ToolLabel>翻转</ToolLabel>
            <ToolCaret />
          </ToolBtn>
          <ToolBtn>
            <ToolIcon><SizeIcon /></ToolIcon>
            <ToolLabel>大小</ToolLabel>
            <ToolCaret />
          </ToolBtn>
        </ToolGroup>
        <RibbonSep />
        <Gallery>
          {Array.from({ length: 8 }, (_, i) => (
            <AbcBox key={i}>Abc</AbcBox>
          ))}
          <GalleryScroll>
            <UpTri />
            <Caret />
            <MoreTri />
          </GalleryScroll>
        </Gallery>
        <FormatGrid>
          <IconCell $gap={7}><BucketIcon /><Caret /></IconCell>
          <IconCell $gap={7}><BlobIcon /><Caret /></IconCell>
          <IconCell $gap={7}><Crop size={18} strokeWidth={2.2} /><Caret /></IconCell>
          <IconCell $gap={7}><BrushStack><BrushIcon /><ColorBar /></BrushStack><Caret /></IconCell>
          <IconCell $gap={7}><LineStyleIcon /><Caret /></IconCell>
          <IconCell $gap={7}><Lock size={18} strokeWidth={2.2} /><Caret /></IconCell>
        </FormatGrid>
        <RibbonSep />
        <ToolGroup $pl={2} $pr={0}>
          <ToolBtn $w={50}>
            <ToolIcon><ToolsIcon /></ToolIcon>
            <ToolLabel>工具</ToolLabel>
            <ToolCaret />
          </ToolBtn>
        </ToolGroup>
        <RibbonSep />
      </Ribbon>

      <Main>
        <LeftPanel>
          <PanelHead>符号库<ChevronsLeft size={17} strokeWidth={1.3} color="#777" /></PanelHead>
          <SearchRow>
            <DrawerBtn><DrawerIcon /><Caret /></DrawerBtn>
            <SearchBox>虚线<Search size={17} strokeWidth={2} /></SearchBox>
            <SpinCol>
              <SpinBtn><ChevronUp size={11} /></SpinBtn>
              <SpinBtn><ChevronDown size={11} /></SpinBtn>
            </SpinCol>
          </SearchRow>
          <LibraryBody>
            <LibraryList>
              <SectionHead><SectionTri />思维导图<SectionClose><X size={13} strokeWidth={1.4} /></SectionClose></SectionHead>
              <ThumbArea>
                <ThumbCell><ThumbShape>Main Idea</ThumbShape></ThumbCell>
              </ThumbArea>
              <SectionHead><SectionTri />基本绘图形状<SectionClose><X size={13} strokeWidth={1.4} /></SectionClose></SectionHead>
              <ShapeGrid>
                {shapes.map((s, i) => (
                  <ShapeTile key={i} on={i === 5}>{s}</ShapeTile>
                ))}
              </ShapeGrid>
            </LibraryList>
            <LibScroll />
          </LibraryBody>
        </LeftPanel>

        <Center>
          <DocTabs>
            <DocTab>
              <DocTabIcon><FileLogo /></DocTabIcon>
              亿图图示教程制作
              <DocTabClose><X size={13} strokeWidth={1.4} /></DocTabClose>
            </DocTab>
          </DocTabs>
          <RulerTop>
            <RulerCorner />
            <RulerTrack>
              {hLabels.map((n, i) => (
                <HCell key={n} $ml={i === 0 ? -16 : 0}>{i === 0 ? "" : n}</HCell>
              ))}
            </RulerTrack>
          </RulerTop>
          <CanvasRow>
            <RulerLeft>
              {vLabels.map((n, i) => (
                <VCell key={n} $mt={i === 0 ? -22 : 0}>{i > 0 && <span>{n}</span>}</VCell>
              ))}
            </RulerLeft>
            <Diagram />
            <VScroll />
          </CanvasRow>
          <HScroll />
          <PaletteRow>
            <BucketCell><BucketIcon size={13} /></BucketCell>
            {palette.map((c, i) => (
              <Swatch key={i} $c={c} />
            ))}
          </PaletteRow>
        </Center>

        <SideRail>
          <RailTop><ChevronsRight size={17} strokeWidth={1.3} /></RailTop>
          <RailItem $on><BucketIcon size={19} fill="#fff" drop="#fff" /></RailItem>
          <RailItem><GridAppIcon /></RailItem>
          <RailItem><Image size={20} strokeWidth={2} /></RailItem>
          <RailItem><Layers size={20} strokeWidth={2} /></RailItem>
          <RailItem><DocListIcon /></RailItem>
          <RailItem><ChartIcon /></RailItem>
          <RailItem><Table size={20} strokeWidth={2} /></RailItem>
          <RailItem><FloorIcon /></RailItem>
          <RailItem><GanttIcon /></RailItem>
          <RailItem><Network size={20} strokeWidth={2} /></RailItem>
          <RailItem><ShrinkIcon /></RailItem>
          <RailItem><SlideIcon /></RailItem>
        </SideRail>

        <PropPanel>
          <PropTabs>
            <PropTab>填充</PropTab>
            <PropTab $on>线条</PropTab>
            <PropTab>阴影</PropTab>
          </PropTabs>
          <PropContent>
            <PropForm>
              <RadioRow><Radio />无线条</RadioRow>
              <RadioRow><Radio $on />实线</RadioRow>
              <RadioRow><Radio />渐变线</RadioRow>
              <RadioRow><Radio />单色渐变线</RadioRow>
              <PropRow $mt={13}>颜色：<ColorField /></PropRow>
              <PropRow $mt={11}>亮度：</PropRow>
              <PropRow $mt={9}>
                <SliderTrack><SliderFill $v={67} /><SliderThumb $v={67} /></SliderTrack>
                <Field $w={60}><FieldText>0 %</FieldText><Spin /></Field>
              </PropRow>
              <PropRow $mt={9}>透明度：</PropRow>
              <PropRow $mt={8}>
                <SliderTrack><SliderThumb $v={6} /></SliderTrack>
                <Field $w={60}><FieldText>0 %</FieldText><Spin /></Field>
              </PropRow>
              <PropRow>宽度：<Field2 text="1.75 pt" spin /></PropRow>
              <PropRow>
                虚线类型：
                <Field2
                  code="01"
                  draw={<path d="M0 11h57" strokeDasharray="8 5" stroke="#666" />}
                />
              </PropRow>
              {propRows.map((r) => (
                <PropRow key={r.label}>{r.label}<Field2 {...r} /></PropRow>
              ))}
            </PropForm>
            <PropScroll />
          </PropContent>
        </PropPanel>
      </Main>

      <StatusBar>
        <PageSelect><PageViewIcon /><PageName>页-1</PageName><Caret $c="#888" /></PageSelect>
        <PageTab $on>页-1</PageTab>
        <PageTab>页-2</PageTab>
        <PageTab>页-3</PageTab>
        <PageTab>页-4</PageTab>
        <AddPage><Plus size={15} strokeWidth={2.2} /></AddPage>
        <StatusRight>
          <ShapeId>形状 ID:&nbsp;417</ShapeId>
          <PlayRing />
          <StatusIcon $ml={9}><Minus size={14} strokeWidth={2.2} /></StatusIcon>
          <ZoomTrack />
          <StatusIcon><Plus size={15} strokeWidth={2.2} /></StatusIcon>
          <ZoomValue>100%</ZoomValue>
          <Caret $c="#aaa" />
          <StatusIcon $ml={17}><FullIcon /></StatusIcon>
          <StatusIcon $ml={7}><FitIcon /></StatusIcon>
        </StatusRight>
      </StatusBar>
    </Body>

    <Annotations width="1603" height="856">
      <g fill="none" stroke="#f00" strokeWidth="3">
        <rect x="1417.500" y="142.500" width="86" height="30" />
        <rect x="1322.500" y="529.500" width="271" height="45" />
      </g>
      <g fill="#f00">
        <polygon points="898,452 900,454.500 1388,199 1386,194" />
        <polygon points="1415,183 1382,191 1387,203" />
        <polygon points="1455,191 1457.500,191 1458,490 1454.500,490" />
        <polygon points="1449.500,483 1463,483 1460,502 1456.500,520 1453,502" />
      </g>
    </Annotations>
  </Window>
);

export default App;
